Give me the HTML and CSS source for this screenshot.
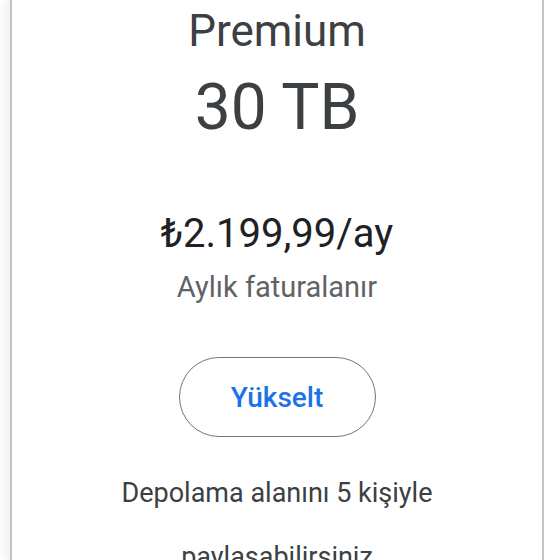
FILE: index.html
```html
<!DOCTYPE html>
<html lang="tr">
<head>
<meta charset="utf-8">
<title>Premium 30 TB</title>
<link rel="stylesheet" href="styles.css">
</head>
<body>
<div class="page">
  <section class="card">
    <h1 class="plan">Premium</h1>
    <div class="size">30 TB</div>
    <div class="price">₺2.199,99/ay</div>
    <div class="billing">Aylık faturalanır</div>
    <button class="upgrade" type="button">Yükselt</button>
    <p class="feature">Depolama alanını 5 kişiyle paylaşabilirsiniz</p>
  </section>
</div>
</body>
</html>
```
FILE: styles.css
```css
html, body {
  margin: 0;
  padding: 0;
  background: #ffffff;
  height: 560px;
  overflow: hidden;
}
body {
  font-family: Roboto, "Noto Sans", "Liberation Sans", sans-serif;
  color: #3c4043;
}
.page {
  display: flex;
  padding-left: 10px;
  width: 534px;
  height: 560px;
}
.card {
  flex: 1;
  display: flex;
  flex-direction: column;
  align-items: center;
  border-left: 2px solid #c4c4c4;
  border-right: 2px solid #c4c4c4;
  box-shadow: -6px 0 8px rgba(0, 0, 0, 0.06);
  padding-top: 5px;
  background: #fff;
}
.card > * {
  flex-shrink: 0;
}
.plan {
  margin: 0;
  font-size: 44px;
  line-height: 52px;
  font-weight: 400;
  color: #3c4043;
}
.size {
  margin-top: 13px;
  font-size: 64px;
  line-height: 76px;
  color: #3c4043;
}
.price {
  margin-top: 64px;
  font-size: 40px;
  line-height: 48px;
  color: #202124;
}
.billing {
  margin-top: 11px;
  font-size: 29px;
  line-height: 36px;
  color: #5f6368;
}
.upgrade {
  margin-top: 52px;
  box-sizing: border-box;
  width: 197px;
  height: 80px;
  border-radius: 40px;
  border: 1.5px solid #757575;
  background: #fff;
  color: #1a73e8;
  font-family: inherit;
  font-size: 28px;
  font-weight: 500;
  padding: 0;
}
.feature {
  margin: 24px 0 0;
  max-width: 340px;
  text-align: center;
  font-size: 27px;
  line-height: 64px;
  color: #3c4043;
}
```
